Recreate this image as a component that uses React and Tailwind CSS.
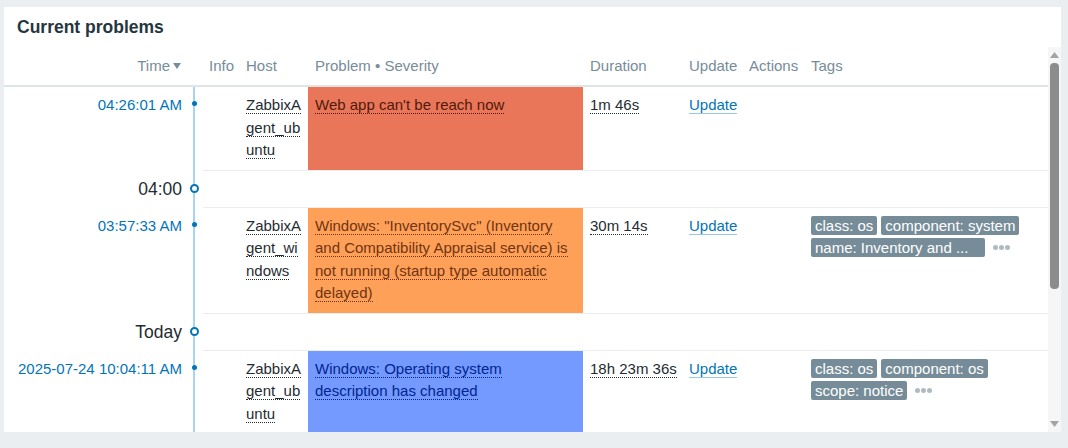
const sevClass = {
  high: 'bg-[#e97659] text-[#52190b]',
  average: 'bg-[#ffa059] text-[#703412]',
  info: 'bg-[#7499ff] text-[#00268e]',
};

const rows = [
  {
    type: 'event',
    time: '04:26:01 AM',
    host: 'ZabbixAgent_ubuntu',
    problem: "Web app can't be reach now",
    sev: 'high',
    duration: '1m 46s',
    tags: [],
  },
  { type: 'sep', label: '04:00' },
  {
    type: 'event',
    time: '03:57:33 AM',
    host: 'ZabbixAgent_windows',
    problem:
      'Windows: "InventorySvc" (Inventory and Compatibility Appraisal service) is not running (startup type automatic delayed)',
    sev: 'average',
    duration: '30m 14s',
    tags: [
      [{ text: 'class: os' }, { text: 'component: system' }],
      [{ text: 'name: Inventory and ...', wide: true }],
    ],
  },
  { type: 'sep', label: 'Today' },
  {
    type: 'event',
    time: '2025-07-24 10:04:11 AM',
    host: 'ZabbixAgent_ubuntu',
    problem: 'Windows: Operating system description has changed',
    sev: 'info',
    duration: '18h 23m 36s',
    tags: [
      [{ text: 'class: os' }, { text: 'component: os' }],
      [{ text: 'scope: notice' }],
    ],
  },
];

const Dotted = ({ children }) => (
  <span className="border-b border-dotted border-current">{children}</span>
);

const Tag = ({ tag }) => (
  <span
    className={`inline-block h-[19px] leading-[19px] px-[4px] rounded-[2px] bg-[#768d99] text-white whitespace-nowrap ${
      tag.wide ? 'w-[174px]' : ''
    }`}
  >
    {tag.text}
  </span>
);

const MoreDots = () => (
  <span className="flex items-center gap-[1px] ml-[4px]">
    <span className="w-[5px] h-[5px] rounded-full bg-[#aebbc2]" />
    <span className="w-[5px] h-[5px] rounded-full bg-[#aebbc2]" />
    <span className="w-[5px] h-[5px] rounded-full bg-[#aebbc2]" />
  </span>
);

const EventRow = ({ row }) => (
  <div className="flex">
    <div className="w-[189px] shrink-0 pr-[11px] pt-[7px] pb-[8px] text-right text-[#0275b8]">{row.time}</div>
    <div className="w-[10px] shrink-0 border-l-2 border-[#a8d4f2] relative">
      <span className="absolute left-[-3.5px] top-[14px] w-[5px] h-[5px] rounded-full bg-[#0275b8]" />
    </div>
    <div className="flex flex-1 border-b border-[#ebeef0]">
      <div className="w-[37px] shrink-0" />
      <div className="w-[68px] shrink-0 pl-[6px] pr-[5px] pt-[7px] pb-[8px] break-all text-[#1f2c33]">
        <Dotted>{row.host}</Dotted>
      </div>
      <div className={`w-[275px] shrink-0 pl-[7px] pr-[8px] pt-[7px] pb-[8px] ${sevClass[row.sev]}`}>
        <Dotted>{row.problem}</Dotted>
      </div>
      <div className="w-[100px] shrink-0 pl-[7px] pt-[7px] pb-[8px] text-[#1f2c33]">
        <Dotted>{row.duration}</Dotted>
      </div>
      <div className="w-[60px] shrink-0 pl-[6px] pt-[7px] pb-[8px] text-[#0275b8]">
        <span className="border-b border-[#0275b8]/40">Update</span>
      </div>
      <div className="w-[62px] shrink-0" />
      <div className="flex-1 pl-[6px] pt-[8.5px] pb-[7.5px] flex flex-col gap-[3px]">
        {row.tags.map((line, i) => (
          <div key={i} className="flex gap-[4px]">
            {line.map((t) => (
              <Tag key={t.text} tag={t} />
            ))}
            {i === row.tags.length - 1 && <MoreDots />}
          </div>
        ))}
      </div>
    </div>
  </div>
);

const SepRow = ({ row }) => (
  <div className="flex h-[37px]">
    <div className="w-[189px] shrink-0 pr-[11px] flex items-center justify-end text-[17.5px] text-[#1f2c33]">
      {row.label}
    </div>
    <div className="w-[10px] shrink-0 border-l-2 border-[#a8d4f2] relative">
      <span className="absolute left-[-5.5px] top-[13.5px] w-[9px] h-[9px] rounded-full border-2 border-[#0275b8] bg-white" />
    </div>
    <div className="flex-1 border-b border-[#ebeef0]" />
  </div>
);

const App = () => {
  return (
    <div className="min-h-screen bg-[#ebeef0] pt-[7px] pl-[4px] font-['Liberation_Sans',Arial,sans-serif] text-[15px] leading-[22.5px]">
      <div className="w-[1057px] h-[425px] bg-white flex flex-col overflow-hidden">
        <div className="h-[40px] shrink-0 flex items-center pl-[13px]">
          <h1 className="text-[17.5px] font-bold text-[#263640]">Current problems</h1>
        </div>

        <div className="flex flex-1 min-h-0">
          <div className="w-[1044px] shrink-0 overflow-hidden">
            {/* Column headers */}
            <div className="flex h-[40px] items-center border-b-2 border-[#dfe4e7] text-[#768d99]">
              <div className="w-[199px] shrink-0 pr-[22px] flex items-center justify-end gap-[3px]">
                <span>Time</span>
                <svg width="8" height="6" viewBox="0 0 8 6">
                  <polygon points="0,0 8,0 4,6" fill="#768d99" />
                </svg>
              </div>
              <div className="w-[37px] shrink-0 pl-[6px]">Info</div>
              <div className="w-[68px] shrink-0 pl-[6px]">Host</div>
              <div className="w-[275px] shrink-0 pl-[7px]">Problem • Severity</div>
              <div className="w-[100px] shrink-0 pl-[7px]">Duration</div>
              <div className="w-[60px] shrink-0 pl-[6px]">Update</div>
              <div className="w-[62px] shrink-0 pl-[6px]">Actions</div>
              <div className="flex-1 pl-[6px]">Tags</div>
            </div>

            {rows.map((row, i) =>
              row.type === 'sep' ? <SepRow key={i} row={row} /> : <EventRow key={i} row={row} />
            )}
          </div>

          {/* Scrollbar */}
          <div className="w-[13px] shrink-0 bg-[#f6f6f6] flex flex-col items-center pt-[5px] pb-[5px]">
            <svg width="9" height="6" viewBox="0 0 9 6" className="shrink-0">
              <polygon points="0,6 9,6 4.5,0" fill="#a3a3a3" />
            </svg>
            <div className="mt-[5px] w-[9px] h-[226px] rounded-[4px] bg-[#8c8c8c]" />
            <div className="flex-1" />
            <svg width="9" height="6" viewBox="0 0 9 6" className="shrink-0">
              <polygon points="0,0 9,0 4.5,6" fill="#a3a3a3" />
            </svg>
          </div>
        </div>
      </div>
    </div>
  );
};

export default App;
